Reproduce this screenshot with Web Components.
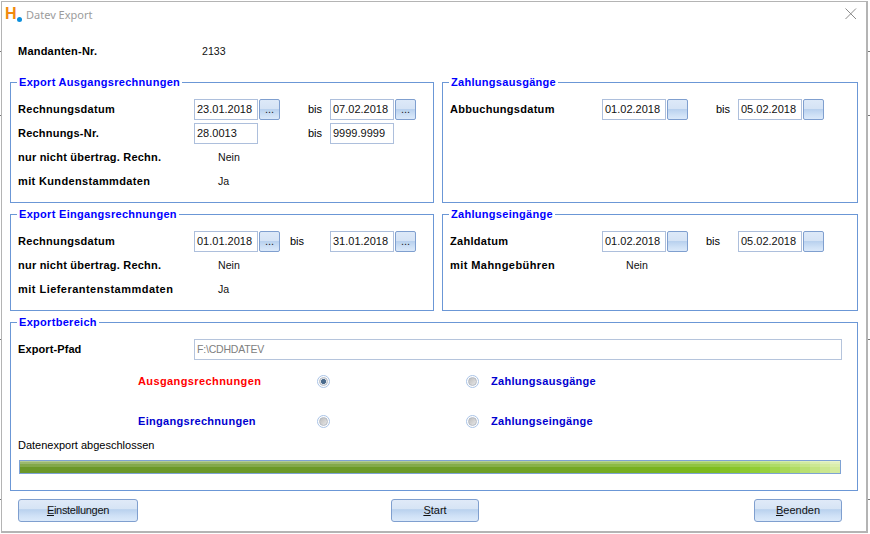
<!DOCTYPE html>
<html lang="de">
<head>
<meta charset="utf-8">
<title>Datev Export</title>
<style>
  html, body { margin: 0; height: 100%; }
  body {
    background-color: #fff;
    background-image:
      linear-gradient(#777, #777), linear-gradient(#777, #777), linear-gradient(#777, #777), linear-gradient(#777, #777),
      linear-gradient(#777, #777), linear-gradient(#777, #777), linear-gradient(#777, #777), linear-gradient(#777, #777);
    background-repeat: no-repeat;
    background-size: 1px 1px, 1px 1px, 1px 1px, 1px 1px, 3px 1px, 3px 1px, 3px 1px, 3px 1px;
    background-position: 0 51px, 0 115px, 0 339px, 0 499px, 867px 51px, 867px 115px, 867px 339px, 867px 499px;
    font: 11px "Liberation Sans", Arial, sans-serif;
    color: #000;
  }
</style>
</head>
<body>
<export-dialog>
  <span slot="title">Datev Export</span>

  <form-row style="--row-h:20px;--label-track:.22px">
    <span slot="label">Mandanten-Nr.</span>
    <plain-value style="--indent:8px">2133</plain-value>
  </form-row>

  <div slot="panels">
    <group-box heading="Export Ausgangsrechnungen" style="--box-h:121px">
      <form-row>
        <span slot="label">Rechnungsdatum</span>
        <date-field value="23.01.2018" dots></date-field>
        <bis-label style="--gap:28px;--w:22px"></bis-label>
        <date-field value="07.02.2018" dots></date-field>
      </form-row>
      <form-row style="--label-track:.22px">
        <span slot="label">Rechnungs-Nr.</span>
        <date-field value="28.0013" plain></date-field>
        <bis-label style="--gap:28px;--w:22px"></bis-label>
        <date-field value="9999.9999" plain></date-field>
      </form-row>
      <form-row style="--label-track:.22px">
        <span slot="label">nur nicht übertrag. Rechn.</span>
        <plain-value>Nein</plain-value>
      </form-row>
      <form-row style="--label-track:.35px">
        <span slot="label">mit Kundenstammdaten</span>
        <plain-value>Ja</plain-value>
      </form-row>
    </group-box>

    <group-box heading="Zahlungsausgänge" style="--box-h:121px">
      <form-row style="--label-w:152px">
        <span slot="label">Abbuchungsdatum</span>
        <date-field value="01.02.2018"></date-field>
        <bis-label style="--gap:28px;--w:22px"></bis-label>
        <date-field value="05.02.2018"></date-field>
      </form-row>
    </group-box>

    <group-box heading="Export Eingangsrechnungen" style="--box-h:97px">
      <form-row>
        <span slot="label">Rechnungsdatum</span>
        <date-field value="01.01.2018" dots></date-field>
        <bis-label style="--gap:10px;--w:40px"></bis-label>
        <date-field value="31.01.2018" dots></date-field>
      </form-row>
      <form-row style="--label-track:.22px">
        <span slot="label">nur nicht übertrag. Rechn.</span>
        <plain-value>Nein</plain-value>
      </form-row>
      <form-row style="--label-track:.47px">
        <span slot="label">mit Lieferantenstammdaten</span>
        <plain-value>Ja</plain-value>
      </form-row>
    </group-box>

    <group-box heading="Zahlungseingänge" style="--box-h:97px">
      <form-row style="--label-w:152px">
        <span slot="label">Zahldatum</span>
        <date-field value="01.02.2018"></date-field>
        <bis-label style="--gap:18px;--w:32px"></bis-label>
        <date-field value="05.02.2018"></date-field>
      </form-row>
      <form-row style="--label-w:152px;--label-track:.43px">
        <span slot="label">mit Mahngebühren</span>
        <plain-value>Nein</plain-value>
      </form-row>
    </group-box>

    <group-box heading="Exportbereich" style="--box-h:169px;grid-column:1 / -1">
      <form-row style="--label-track:.1px">
        <span slot="label">Export-Pfad</span>
        <path-field>F:\CDHDATEV</path-field>
      </form-row>
      <radio-table>
        <radio-option style="--tone:#f00;--label-track:.4px" checked>Ausgangsrechnungen</radio-option>
        <radio-option after>Zahlungsausgänge</radio-option>
        <radio-option>Eingangsrechnungen</radio-option>
        <radio-option after>Zahlungseingänge</radio-option>
      </radio-table>
      <export-progress>Datenexport abgeschlossen</export-progress>
    </group-box>
  </div>

  <div slot="actions">
    <push-button style="--w:120px;--track:-.3px"><u>E</u>instellungen</push-button>
    <push-button style="--w:88px;--before:253px"><u>S</u>tart</push-button>
    <push-button style="--w:88px;--before:275px"><u>B</u>eenden</push-button>
  </div>
</export-dialog>

<script>
const shadowFrom = (host, html) => {
  const template = document.createElement('template');
  template.innerHTML = html;
  host.attachShadow({ mode: 'open' }).appendChild(template.content.cloneNode(true));
};

class ExportDialog extends HTMLElement {
  constructor() {
    super();
    shadowFrom(this, `
      <style>
        :host {
          display: block;
          box-sizing: border-box;
          width: 867px;
          height: 532px;
          margin: 1px 0 0 1px;
          background: #fff;
          border: 1px solid #b4b4b4;
          border-width: 1px 2px 2px 1px;
        }
        .titlebar {
          box-sizing: border-box;
          display: flex;
          align-items: center;
          height: 27px;
          padding: 0 8px 3px 3px;
        }
        .logo {
          display: flex;
          align-items: flex-start;
          width: 21px;
          height: 20px;
          padding-top: 1px;
          box-sizing: border-box;
          font: bold 16px/17px "Liberation Sans", Arial, sans-serif;
          color: #f18a0f;
        }
        .logo i {
          width: 5px;
          height: 5px;
          margin: 12px 0 0 0;
          border-radius: 50%;
          background: #0b8fdd;
        }
        .title {
          flex: 1;
          font: 11px "Noto Sans", "Open Sans", sans-serif;
          color: #9c9c9c;
        }
        .content { padding: 12px 8px 0 16px; }
        .panels { margin-top: 21px; }
        .actions { margin-top: 8px; }
        ::slotted([slot="panels"]) {
          display: grid;
          grid-template-columns: 424px 416px;
          column-gap: 8px;
          row-gap: 11px;
          margin-left: -8px;
        }
        ::slotted([slot="actions"]) {
          display: flex;
          margin-right: 16px;
        }
      </style>
      <div class="titlebar">
        <span class="logo">H<i></i></span>
        <span class="title"><slot name="title"></slot></span>
        <svg width="14" height="14" viewBox="0 0 14 14" aria-hidden="true">
          <path d="M1.5 1.5 L12 12 M12 1.5 L1.5 12" stroke="#8a8a8a" stroke-width="1" fill="none"/>
        </svg>
      </div>
      <div class="content">
        <slot></slot>
        <div class="panels"><slot name="panels"></slot></div>
        <div class="actions"><slot name="actions"></slot></div>
      </div>
    `);
  }
}

class GroupBox extends HTMLElement {
  constructor() {
    super();
    shadowFrom(this, `
      <style>
        :host {
          display: block;
          box-sizing: border-box;
          height: var(--box-h, 100px);
          border: 1px solid #6b97d6;
          padding: 0 7px;
        }
        .heading {
          display: block;
          width: fit-content;
          height: 14px;
          margin: -8px 0 8px -1px;
          padding: 0 2px;
          background: #fff;
          font: bold 11px/14px "Liberation Sans", Arial, sans-serif;
          letter-spacing: .3px;
          color: #00f;
        }
      </style>
      <span class="heading"></span>
      <slot></slot>
    `);
    this.shadowRoot.querySelector('.heading').textContent = this.getAttribute('heading');
  }
}

class FormRow extends HTMLElement {
  constructor() {
    super();
    shadowFrom(this, `
      <style>
        :host {
          display: flex;
          align-items: center;
          height: var(--row-h, 24px);
        }
        .label {
          flex: none;
          width: var(--label-w, 176px);
          font: bold 11px "Liberation Sans", Arial, sans-serif;
          letter-spacing: var(--label-track, .3px);
        }
      </style>
      <span class="label"><slot name="label"></slot></span>
      <slot></slot>
    `);
  }
}

class DateField extends HTMLElement {
  constructor() {
    super();
    const hasButton = !this.hasAttribute('plain');
    shadowFrom(this, `
      <style>
        :host { display: flex; flex: none; width: 86px; height: 21px; }
        .box {
          box-sizing: border-box;
          width: 64px;
          height: 21px;
          border: 1px solid #adbfdc;
          padding: 0 2px;
          font: 11px/19px "Liberation Sans", Arial, sans-serif;
          background: #fff;
          color: #111;
        }
        .btn {
          box-sizing: border-box;
          width: 21px;
          height: 21px;
          margin-left: 1px;
          border: 1px solid #7f9fcf;
          border-radius: 2px;
          background: linear-gradient(#dde9f8 0, #d5e3f5 45%, #b9d1ee 50%, #cfe1f6 80%, #dbe9fa 100%);
          font: 11px/18px "Liberation Sans", Arial, sans-serif;
          text-align: center;
          color: #222;
        }
      </style>
      <span class="box"></span>
      ${hasButton ? `<span class="btn">${this.hasAttribute('dots') ? '...' : ''}</span>` : ''}
    `);
    this.shadowRoot.querySelector('.box').textContent = this.getAttribute('value');
  }
}

class BisLabel extends HTMLElement {
  constructor() {
    super();
    shadowFrom(this, `
      <style>
        :host {
          display: block;
          flex: none;
          margin-left: var(--gap, 28px);
          width: var(--w, 22px);
          font: 11px "Liberation Sans", Arial, sans-serif;
        }
      </style>
      bis
    `);
  }
}

class PlainValue extends HTMLElement {
  constructor() {
    super();
    shadowFrom(this, `
      <style>
        :host {
          display: block;
          padding-left: var(--indent, 24px);
          font: 10.6px "Liberation Sans", Arial, sans-serif;
          color: #111;
        }
      </style>
      <slot></slot>
    `);
  }
}

class PathField extends HTMLElement {
  constructor() {
    super();
    shadowFrom(this, `
      <style>
        :host {
          display: block;
          box-sizing: border-box;
          width: 648px;
          height: 21px;
          border: 1px solid #b5c4dc;
          padding: 0 2px;
          font: 10.5px/19px "Liberation Sans", Arial, sans-serif;
          letter-spacing: -.2px;
          color: #808080;
        }
      </style>
      <slot></slot>
    `);
  }
}

class RadioTable extends HTMLElement {
  constructor() {
    super();
    shadowFrom(this, `
      <style>
        :host {
          display: grid;
          grid-template-columns: 328px 1fr;
          grid-auto-rows: 14px;
          row-gap: 26px;
          margin: 13px 0 0 120px;
        }
      </style>
      <slot></slot>
    `);
  }
}

class RadioOption extends HTMLElement {
  constructor() {
    super();
    const after = this.hasAttribute('after');
    shadowFrom(this, `
      <style>
        :host {
          display: flex;
          align-items: center;
          height: 14px;
          font: bold 11px "Liberation Sans", Arial, sans-serif;
          letter-spacing: var(--label-track, .3px);
          color: var(--tone, #0000d0);
        }
        .text { width: ${after ? 'auto' : '179px'}; }
        .dot {
          box-sizing: border-box;
          flex: none;
          display: flex;
          align-items: center;
          justify-content: center;
          width: 13px;
          height: 13px;
          margin-right: 12px;
          border: 1px solid #a9c3e6;
          border-radius: 50%;
          background: #fff;
        }
        .dot i {
          display: block;
          width: 9px;
          height: 9px;
          border-radius: 50%;
          background: linear-gradient(135deg, #bdbdbd, #e6e6e6);
          box-sizing: border-box;
          border: 1px solid #b3b9c2;
        }
        .dot.on i { background: radial-gradient(circle, #4a6a8c 0 2.2px, #dfe3e8 2.8px); }
      </style>
      ${after ? '<span class="dot"><i></i></span>' : ''}
      <span class="text"><slot></slot></span>
      ${after ? '' : '<span class="dot"><i></i></span>'}
    `);
    if (this.hasAttribute('checked')) this.shadowRoot.querySelector('.dot').classList.add('on');
  }
}

// bar colour along its width, sampled from the screenshot
const BAR_KEYS = [
  [0, [107, 151, 41]], [400, [107, 154, 40]], [540, [114, 165, 36]],
  [690, [124, 187, 28]], [740, [147, 207, 55]], [780, [180, 222, 105]], [820, [216, 237, 166]],
];

const barColorAt = (x) => {
  for (let i = 1; i < BAR_KEYS.length; i += 1) {
    const [x0, c0] = BAR_KEYS[i - 1];
    const [x1, c1] = BAR_KEYS[i];
    if (x <= x1) {
      const t = (x - x0) / (x1 - x0);
      return `rgb(${c0.map((v, n) => Math.round(v + (c1[n] - v) * t)).join(',')})`;
    }
  }
  return 'rgb(216,237,166)';
};

const barSegments = () => {
  const stops = [];
  for (let x = 0; x < 820; x += 10) {
    const color = barColorAt(x + 5);
    stops.push(`${color} ${x}px ${x + 10}px`);
  }
  return `linear-gradient(90deg, ${stops.join(', ')})`;
};

class ExportProgress extends HTMLElement {
  constructor() {
    super();
    shadowFrom(this, `
      <style>
        :host {
          display: block;
          margin-top: 10px;
          font: 11px/14px "Liberation Sans", Arial, sans-serif;
        }
        .bar {
          box-sizing: border-box;
          width: 822px;
          height: 14px;
          margin: 8px 0 0 1px;
          border: 1px solid #7ea2d4;
          background:
            linear-gradient(rgba(255,255,255,.5) 0 1px, rgba(255,255,255,.32) 1px 3px, rgba(255,255,255,.16) 3px 6px, rgba(255,255,255,0) 6px),
            ${barSegments()};
        }
      </style>
      <slot></slot>
      <div class="bar"></div>
    `);
  }
}

class PushButton extends HTMLElement {
  constructor() {
    super();
    shadowFrom(this, `
      <style>
        :host {
          display: block;
          box-sizing: border-box;
          flex: none;
          width: var(--w, 88px);
          height: 23px;
          margin-left: var(--before, 0);
          border: 1px solid #7f9fcf;
          border-radius: 3px;
          background: linear-gradient(#e0eaf8 0, #d6e4f5 42%, #b9d1ee 46%, #cfe1f6 75%, #dbe9fa 100%);
          font: 11px/20px "Liberation Sans", Arial, sans-serif;
          letter-spacing: var(--track, 0);
          text-align: center;
          color: #111;
        }
      </style>
      <slot></slot>
    `);
  }
}

customElements.define('export-dialog', ExportDialog);
customElements.define('group-box', GroupBox);
customElements.define('form-row', FormRow);
customElements.define('date-field', DateField);
customElements.define('bis-label', BisLabel);
customElements.define('plain-value', PlainValue);
customElements.define('path-field', PathField);
customElements.define('radio-table', RadioTable);
customElements.define('radio-option', RadioOption);
customElements.define('export-progress', ExportProgress);
customElements.define('push-button', PushButton);
</script>
</body>
</html>
